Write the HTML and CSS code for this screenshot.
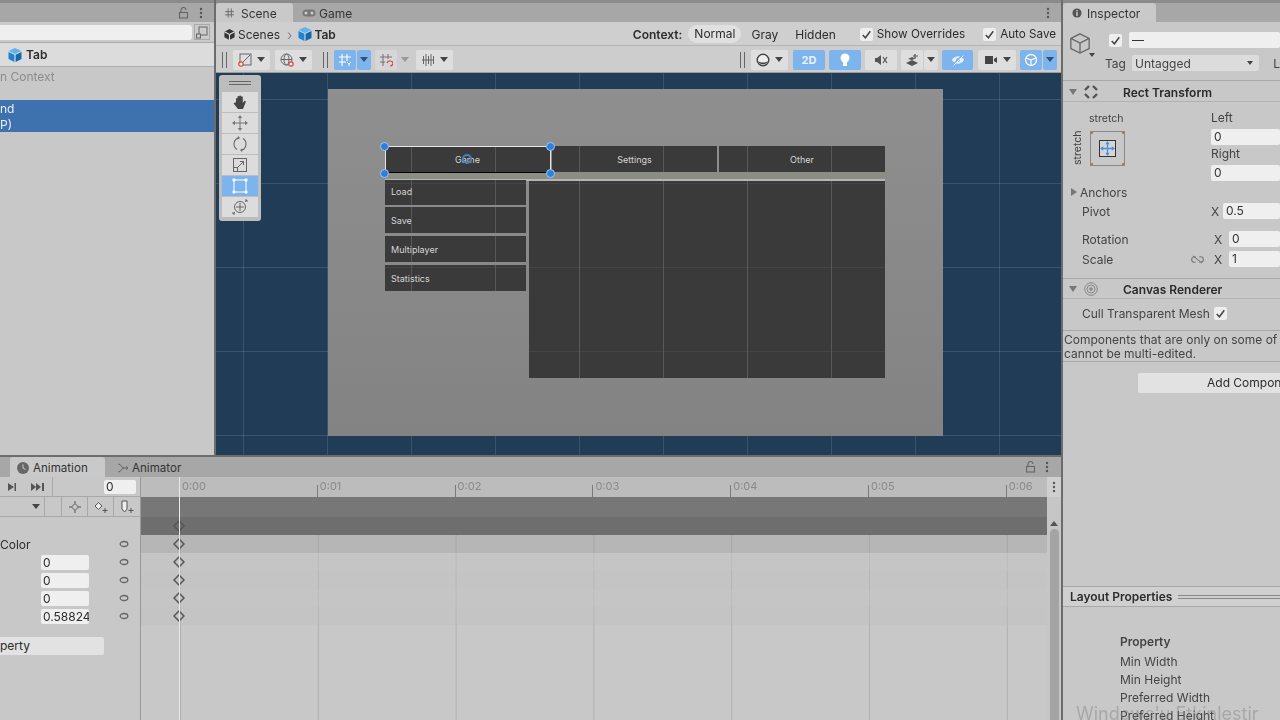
FILE: index.html
```html
<!DOCTYPE html>
<html lang="en">

<head>
   <meta charset="utf-8" />
   <title>Tab - Unity editor</title>
   <link rel="stylesheet" href="styles.css">
</head>

<body>
   <svg class="defs" width="0" height="0">
      <symbol id="cube" viewBox="0 0 14 14">
         <path d="M7 0 13.5 3 7 6 .5 3z" fill="#5fb4ee" />
         <path d="M.5 4 6.4 6.8V14L.5 11z" fill="#1f83d4" />
         <path d="M13.5 4 7.6 6.8V14l5.9-3z" fill="#1468ad" />
      </symbol>
      <symbol id="lock" viewBox="0 0 12 12">
         <path d="M3 5V3a2.5 2.5 0 0 1 5 0" fill="none" stroke="#666" stroke-width="1.1" />
         <rect x="1.5" y="5.5" width="8" height="5.5" fill="none" stroke="#666" stroke-width="1.1" />
      </symbol>
      <symbol id="dots" viewBox="0 0 4 12">
         <circle cx="2" cy="2" r="1.2" fill="#555" />
         <circle cx="2" cy="6" r="1.2" fill="#555" />
         <circle cx="2" cy="10" r="1.2" fill="#555" />
      </symbol>
      <symbol id="check" viewBox="0 0 12 12">
         <path d="M2.5 6.5 5 9l4.500-6" fill="none" stroke="#444" stroke-width="1.4" />
      </symbol>
      <symbol id="key" viewBox="0 0 12 12">
         <path d="M6 1 11 6 6 11 1 6z" fill="none" stroke="#555" stroke-width="1.5" />
      </symbol>
      <symbol id="oval" viewBox="0 0 10 8">
         <ellipse cx="5" cy="4" rx="3.8" ry="2.5" fill="none" stroke="#666" stroke-width="1.3" />
      </symbol>
   </svg>

   <div class="editor">
      <div class="work">
         <div class="upper">
            <!-- hierarchy -->
            <section class="hierarchy">
               <div class="tabbar tabbar-end">
                  <svg class="ico12"><use href="#lock" /></svg>
                  <svg class="ico-dots"><use href="#dots" /></svg>
               </div>
               <div class="search-row">
                  <div class="search-field"></div>
                  <svg class="search-btn" viewBox="0 0 16 16">
                     <rect x=".5" y=".5" width="15" height="15" fill="none" stroke="#aaa" />
                     <rect x="5" y="3" width="8" height="8" fill="none" stroke="#666" />
                     <rect x="2.5" y="10" width="4" height="4" fill="#c8c8c8" stroke="#666" />
                  </svg>
               </div>
               <div class="crumb-row">
                  <svg class="ico14"><use href="#cube" /></svg>
                  <b>Tab</b>
               </div>
               <div class="context-note">n Context</div>
               <div class="selected-row">nd<br>P)</div>
            </section>

            <!-- scene -->
            <section class="scene-panel">
               <div class="tabbar">
                  <div class="tab tab-scene">
                     <svg class="ico-hash" viewBox="0 0 10 10"><path d="M3.5 0v10M7 0v10M0 3.5h10M0 7h10" stroke="#666" stroke-width="1" /></svg>
                     Scene
                  </div>
                  <div class="tab tab-game">
                     <svg class="ico-game" viewBox="0 0 14 8"><rect x=".5" y=".5" width="13" height="7" rx="3.5" fill="#777" /><circle cx="4" cy="4" r="1.5" fill="#ccc" /><circle cx="10" cy="4" r="1.5" fill="#ccc" /></svg>
                     Game
                  </div>
                  <svg class="ico-dots push"><use href="#dots" /></svg>
               </div>
               <div class="context-row">
                  <svg class="ico-scenes" viewBox="0 0 14 14"><path d="M7 1 12.5 4v6L7 13 1.5 10V4z" fill="#333" /><path d="M7 7V13M7 7 1.5 4M7 7l5.5-3" stroke="#ddd" stroke-width="1.2" /></svg>
                  <span class="crumb-scenes">Scenes</span>
                  <span class="crumb-sep">&rsaquo;</span>
                  <svg class="ico14"><use href="#cube" /></svg>
                  <b class="crumb-tab">Tab</b>
                  <b class="context-label">Context:</b>
                  <span class="pill">Normal</span>
                  <span class="ctx-gray">Gray</span>
                  <span class="ctx-hidden">Hidden</span>
                  <span class="checkbox ctx-check"><svg><use href="#check" /></svg></span>
                  <span class="check-text">Show Overrides</span>
                  <span class="checkbox ctx-check2"><svg><use href="#check" /></svg></span>
                  <span class="check-text">Auto Save</span>
               </div>
               <div class="toolbar">
                  <i class="grip"></i>
                  <div class="tbtn w37 ml6">
                     <svg class="ico14" viewBox="0 0 14 14"><rect x="2" y="1" width="11" height="11" fill="none" stroke="#666" /><path d="M3 11 12 2" stroke="#666" /><circle cx="3" cy="11" r="2.2" fill="#eee" stroke="#d44" stroke-width="1.2" /></svg>
                     <i class="arrow"></i>
                  </div>
                  <div class="tbtn w37 ml5">
                     <svg class="ico14" viewBox="0 0 14 14"><circle cx="6.5" cy="6.5" r="5.5" fill="none" stroke="#666" /><ellipse cx="6.5" cy="6.5" rx="2.5" ry="5.5" fill="none" stroke="#666" /><path d="M1 6.500h11" stroke="#666" /><circle cx="11" cy="11" r="2.2" fill="#eee" stroke="#d44" stroke-width="1.2" /></svg>
                     <i class="arrow"></i>
                  </div>
                  <i class="grip ml11"></i>
                  <div class="tbtn on w22 ml6">
                     <svg class="ico14" viewBox="0 0 14 14"><path d="M4 1v12M9 1v7M1 4h12M1 9h7" stroke="#fff" stroke-width="1.1" /><path d="M9 9l2 2 2-2M11 11v2" stroke="#fff" fill="none" /></svg>
                  </div>
                  <div class="tbtn on w14 ml1"><i class="arrow"></i></div>
                  <div class="tbtn off w22 ml4">
                     <svg class="ico14" viewBox="0 0 14 14"><path d="M4 1v12M9 1v5M1 4h12M1 9h5" stroke="#777" stroke-width="1.1" /><path d="M8 10a3 2.5 0 1 1 3 3" fill="none" stroke="#d44" stroke-width="1.2" /></svg>
                  </div>
                  <div class="tbtn off w14 ml1"><i class="arrow arrow-dim"></i></div>
                  <div class="tbtn w37 ml4">
                     <svg class="ico14" viewBox="0 0 14 14"><path d="M1 7h12M2.5 3v8M5 1v12M7.5 3v8M10 1v12M12.500 3v8" stroke="#666" stroke-width="1" /></svg>
                     <i class="arrow"></i>
                  </div>
                  <i class="grip grip-right"></i>
                  <div class="tbtn w37 ml6">
                     <svg class="ico14" viewBox="0 0 14 14"><circle cx="7" cy="7" r="5.8" fill="#eee" stroke="#444" stroke-width="1.4" /><path d="M2 8a5.5 5.5 0 0 0 10 0C9 10 5 10 2 8z" fill="#444" /></svg>
                     <i class="arrow"></i>
                  </div>
                  <div class="tbtn on w32 ml5 label-2d">2D</div>
                  <div class="tbtn on w32 ml4">
                     <svg class="ico14" viewBox="0 0 14 14"><circle cx="7" cy="5" r="4.5" fill="#fff" /><rect x="5" y="9" width="4" height="4" fill="#fff" /></svg>
                  </div>
                  <div class="tbtn w32 ml4">
                     <svg class="ico14" viewBox="0 0 14 14"><path d="M1 5h2l4-3v10L3 9H1z" fill="#555" /><path d="M9 4l4 6M13 4 9 10" stroke="#555" stroke-width="1.2" /></svg>
                  </div>
                  <div class="tbtn w22 ml4">
                     <svg class="ico14" viewBox="0 0 14 14"><path d="M1 10 7 7l6 3-6 3zM3 6l4-2 3 1.5L7 7z" fill="#555" /><path d="M10 1v5M8 3h5" stroke="#555" stroke-width="1.2" /></svg>
                  </div>
                  <div class="tbtn w14 ml1"><i class="arrow"></i></div>
                  <div class="tbtn on w31 ml4">
                     <svg class="ico14" viewBox="0 0 14 14"><path d="M1 7c3-5 9-5 12 0-3 5-9 5-12 0z" fill="#e8f2fc" /><circle cx="7" cy="7" r="2" fill="#7fb5ee" /><path d="M2 12 12 2" stroke="#7fb5ee" stroke-width="2" /><path d="M2.500 12.500 12.500 2.500" stroke="#e8f2fc" stroke-width="1" /></svg>
                  </div>
                  <div class="tbtn w38 ml5">
                     <svg class="ico14" viewBox="0 0 14 14"><rect x="1" y="3" width="8" height="8" fill="#444" /><path d="M10 6l3-2v6l-3-2z" fill="#444" /></svg>
                     <i class="arrow"></i>
                  </div>
                  <div class="tbtn on w22 ml4">
                     <svg class="ico14" viewBox="0 0 14 14"><circle cx="7" cy="7" r="5.5" fill="none" stroke="#fff" stroke-width="1.3" /><path d="M7 7 2 5M7 7l5-2M7 7v6" stroke="#fff" stroke-width="1.2" /></svg>
                  </div>
                  <div class="tbtn on w14 ml1"><i class="arrow"></i></div>
               </div>

               <div class="scene-view">
                  <div class="scene-grid"></div>
                  <div class="canvas-rect"></div>
                  <div class="ui-box tab-btn tab-btn-1">Game</div>
                  <div class="ui-box tab-btn tab-btn-2">Settings</div>
                  <div class="ui-box tab-btn tab-btn-3">Other</div>
                  <div class="strip"></div>
                  <div class="ui-box menu-btn menu-1">Load</div>
                  <div class="ui-box menu-btn menu-2">Save</div>
                  <div class="ui-box menu-btn menu-3">Multiplayer</div>
                  <div class="ui-box menu-btn menu-4">Statistics</div>
                  <div class="ui-box big-panel"></div>
                  <div class="canvas-grid"></div>
                  <div class="selection"></div>
                  <i class="handle h-tl"></i>
                  <i class="handle h-tr"></i>
                  <i class="handle h-bl"></i>
                  <i class="handle h-br"></i>
                  <i class="pivot"></i>

                  <div class="tools">
                     <div class="tools-grip"></div>
                     <div class="tool">
                        <svg class="ico16" viewBox="0 0 16 16"><path d="M4 8V4.500a1 1 0 0 1 1.500 0V7V2.500a1 1 0 0 1 1.800 0V7V2a1 1 0 0 1 1.800 0v5V3a1 1 0 0 1 1.700 0v6l1.500-2a1 1 0 0 1 1.500 1L11 15H6L2 10c-.5-1 .6-2 1.500-1.200z" fill="#444" /></svg>
                     </div>
                     <div class="tool">
                        <svg class="ico16" viewBox="0 0 16 16"><path d="M8 3v10M3 8h10" stroke="#777" stroke-width="1" /><path d="M8 0l2.200 3H5.800zM8 16l2.200-3H5.800zM0 8l3-2.200v4.400zM16 8l-3-2.200v4.400z" fill="#777" /></svg>
                     </div>
                     <div class="tool">
                        <svg class="ico16" viewBox="0 0 16 16"><path d="M5 13.500A6.500 6.500 0 0 1 7 1.700M11 2.500a6.500 6.500 0 0 1-2 11.800" fill="none" stroke="#666" stroke-width="1.1" /><path d="M6 0l2 2-2.500 1.500zM10 16l-2-2 2.500-1.500z" fill="#666" /></svg>
                     </div>
                     <div class="tool">
                        <svg class="ico16" viewBox="0 0 16 16"><rect x="1.5" y="1.5" width="13" height="13" fill="none" stroke="#666" /><rect x="1.5" y="10.5" width="4" height="4" fill="none" stroke="#666" /><path d="M6 10 11.500 4.500M8 4.500h3.500V8" fill="none" stroke="#666" /></svg>
                     </div>
                     <div class="tool tool-on">
                        <svg class="ico16" viewBox="0 0 16 16"><rect x="2" y="2" width="12" height="12" fill="none" stroke="#fff" /><path d="M1 1h2v2H1zM13 1h2v2h-2zM1 13h2v2H1zM13 13h2v2h-2z" fill="#fff" stroke="#fff" /></svg>
                     </div>
                     <div class="tool">
                        <svg class="ico16" viewBox="0 0 16 16"><circle cx="8" cy="8" r="5.5" fill="none" stroke="#666" /><path d="M8 4v8M4 8h8M1 15l2-2M15 1l-2 2" stroke="#666" /><path d="M1 13v2h2M15 3V1h-2" fill="none" stroke="#666" /></svg>
                     </div>
                  </div>
               </div>
            </section>
         </div>

         <!-- animation -->
         <section class="animation">
            <div class="tabbar anim-tabs">
               <div class="tab tab-anim">
                  <svg class="ico12" viewBox="0 0 12 12"><circle cx="6" cy="6" r="6" fill="#666" /><path d="M6 2.500V6l2.500 1.500" fill="none" stroke="#ccc" /></svg>
                  Animation
               </div>
               <div class="tab tab-animator">
                  <svg class="ico12" viewBox="0 0 12 12"><path d="M1 2c4 0 3 4 6 4M1 10c4 0 3-4 6-4h4M9 4l2 2-2 2" fill="none" stroke="#666" /></svg>
                  Animator
               </div>
               <svg class="ico12 push"><use href="#lock" /></svg>
               <svg class="ico-dots"><use href="#dots" /></svg>
            </div>
            <div class="anim-body">
               <div class="anim-side">
                  <div class="side-row side-controls">
                     <svg class="ctl ctl-1" viewBox="0 0 10 10"><path d="M1 1l6 4-6 4z" fill="#555" /><rect x="7.5" y="1" width="1.5" height="8" fill="#555" /></svg>
                     <svg class="ctl ctl-2" viewBox="0 0 14 10"><path d="M0 1l5 4-5 4zM5 1l5 4-5 4z" fill="#555" /><rect x="11" y="1" width="2" height="8" fill="#555" /></svg>
                     <i class="ctl-sep"></i>
                     <div class="frame-field">0</div>
                  </div>
                  <div class="side-row side-keys">
                     <i class="arrow key-arrow"></i>
                     <span class="key-gap"></span>
                     <span class="key-btn">
                        <svg class="ico12" viewBox="0 0 12 12"><path d="M6 2.500 9.500 6 6 9.500 2.500 6z" fill="none" stroke="#555" /><path d="M6 0v2.500M6 9.500V12M0 6h2.500M9.500 6H12" stroke="#555" /></svg>
                     </span>
                     <span class="key-btn">
                        <svg class="ico14" viewBox="0 0 14 14"><path d="M4.500 2.500 8 6 4.500 9.500 1 6z" fill="#eee" stroke="#555" /><path d="M11 8v5M8.500 10.500h5" stroke="#555" /></svg>
                     </span>
                     <span class="key-btn">
                        <svg class="ico14" viewBox="0 0 14 14"><path d="M2 1h5v8L4.500 12 2 9z" fill="#eee" stroke="#555" /><path d="M11 8v5M8.500 10.500h5" stroke="#555" /></svg>
                     </span>
                  </div>
                  <div class="side-row"></div>
                  <div class="side-row prop-row"><span class="prop-name">Color</span><svg class="oval"><use href="#oval" /></svg></div>
                  <div class="side-row prop-row"><span class="prop-val">0</span><svg class="oval"><use href="#oval" /></svg></div>
                  <div class="side-row prop-row"><span class="prop-val">0</span><svg class="oval"><use href="#oval" /></svg></div>
                  <div class="side-row prop-row"><span class="prop-val">0</span><svg class="oval"><use href="#oval" /></svg></div>
                  <div class="side-row prop-row"><span class="prop-val">0.58824</span><svg class="oval"><use href="#oval" /></svg></div>
                  <div class="add-prop">perty</div>
               </div>
               <div class="timeline">
                  <div class="ruler">
                     <span class="mark mark-first">0:00</span>
                     <span class="mark">0:01</span>
                     <span class="mark">0:02</span>
                     <span class="mark">0:03</span>
                     <span class="mark">0:04</span>
                     <span class="mark">0:05</span>
                     <span class="mark">0:06</span>
                  </div>
                  <div class="track track-dark"></div>
                  <div class="track track-darker"><svg class="key"><use href="#key" /></svg></div>
                  <div class="track track-head"><svg class="key"><use href="#key" /></svg></div>
                  <div class="track track-a"><svg class="key"><use href="#key" /></svg></div>
                  <div class="track track-b"><svg class="key"><use href="#key" /></svg></div>
                  <div class="track track-a"><svg class="key"><use href="#key" /></svg></div>
                  <div class="track track-b"><svg class="key"><use href="#key" /></svg></div>
                  <div class="playhead"></div>
               </div>
               <div class="anim-scroll">
                  <div class="scroll-top"><svg class="ico-dots"><use href="#dots" /></svg></div>
                  <div class="scroll-spacer"></div>
                  <div class="scroll-up"></div>
                  <div class="scroll-thumb"></div>
               </div>
            </div>
         </section>
      </div>

      <!-- inspector -->
      <section class="inspector">
         <div class="tabbar">
            <div class="tab tab-inspector">
               <svg class="ico-info" viewBox="0 0 12 12"><circle cx="6" cy="6" r="5.5" fill="#555" /><rect x="5.2" y="5" width="1.6" height="4.5" fill="#ddd" /><rect x="5.2" y="2.5" width="1.6" height="1.6" fill="#ddd" /></svg>
               Inspector
            </div>
         </div>
         <div class="obj-head">
            <div class="obj-icon">
               <svg viewBox="0 0 24 24" class="obj-cube"><path d="M12 2 22 7v11l-10 5L2 18V7zM2 7l10 5 10-5M12 12v11" fill="none" stroke="#666" stroke-width="1.4" /></svg>
               <i class="arrow obj-arrow"></i>
            </div>
            <div class="obj-fields">
               <div class="obj-line">
                  <span class="checkbox"><svg><use href="#check" /></svg></span>
                  <div class="field obj-name">&mdash;</div>
               </div>
               <div class="obj-line obj-tag">
                  <span>Tag</span>
                  <div class="field-drop">Untagged<i class="arrow"></i></div>
                  <span class="layer-l">L</span>
               </div>
            </div>
         </div>
         <div class="comp-head comp-rect">
            <i class="fold"></i>
            <svg class="ico14 comp-icon" viewBox="0 0 14 14"><path d="M1 5 5 1M13 5 9 1M1 9l4 4M13 9l-4 4" fill="none" stroke="#555" stroke-width="2.4" /></svg>
            <b>Rect Transform</b>
         </div>
         <div class="rect-body">
            <div class="anchor-col">
               <span class="anchor-top">stretch</span>
               <div class="anchor-row">
                  <span class="anchor-side">stretch</span>
                  <div class="anchor-box">
                     <div class="anchor-inner">
                        <svg viewBox="0 0 14 14"><path d="M7 1v12M1 7h12" stroke="#4a90e2" stroke-width="1.2" /><path d="M7 0 9 3H5zM7 14 9 11H5zM0 7 3 5V9zM14 7 11 5V9z" fill="#4a90e2" /></svg>
                     </div>
                  </div>
               </div>
            </div>
            <div class="rect-fields">
               <span>Left</span>
               <div class="field">0</div>
               <span>Right</span>
               <div class="field">0</div>
            </div>
         </div>
         <div class="anchors-row"><i class="fold-right"></i>Anchors</div>
         <div class="prop-line pivot-line"><span>Pivot</span><span class="axis">X</span><div class="field">0.5</div></div>
         <div class="prop-line rot-line"><span>Rotation</span><span class="axis">X</span><div class="field">0</div></div>
         <div class="prop-line scale-line">
            <span>Scale</span>
            <svg class="link" viewBox="0 0 14 10"><path d="M5 2H3.500a3 3 0 0 0 0 6H5M9 2h1.500a3 3 0 0 1 0 6H9M2 1l10 8" fill="none" stroke="#777" stroke-width="1.2" /></svg>
            <span class="axis">X</span>
            <div class="field">1</div>
         </div>
         <div class="comp-head comp-canvas">
            <i class="fold"></i>
            <svg class="ico14 comp-icon" viewBox="0 0 14 14"><circle cx="7" cy="7" r="6.3" fill="none" stroke="#888" /><circle cx="7" cy="7" r="4" fill="none" stroke="#888" /><circle cx="7" cy="7" r="1.8" fill="#888" /></svg>
            <b>Canvas Renderer</b>
         </div>
         <div class="cull-row">
            <span>Cull Transparent Mesh</span>
            <span class="checkbox"><svg><use href="#check" /></svg></span>
         </div>
         <div class="multi-note">Components that are only on some of<br>cannot be multi-edited.</div>
         <div class="add-comp">Add Component</div>
         <div class="layout-head">
            <b>Layout Properties</b>
            <i class="head-lines"></i>
         </div>
         <div class="layout-table">
            <b>Property</b>
            <span>Min Width</span>
            <span>Min Height</span>
            <span>Preferred Width</span>
            <span>Preferred Height</span>
         </div>
         <div class="watermark">Windows'u Etkinleştir</div>
      </section>
   </div>
</body>

</html>
```

FILE: styles.css
```css
* {
   box-sizing: border-box;
}

html,
body {
   margin: 0;
   padding: 0;
}

body {
   width: 1280px;
   height: 720px;
   overflow: hidden;
   background: #6c6c6c;
   color: #2c2c2c;
   font-family: "Inter", "Liberation Sans", sans-serif;
   font-size: 12px;
}

b {
   font-weight: 600;
}

i {
   display: block;
}

svg {
   display: block;
   flex: none;
}

.defs {
   position: absolute;
}

.editor {
   display: flex;
   width: 1280px;
   height: 720px;
   filter: blur(.45px);
}

.work {
   width: 1061px;
   display: flex;
   flex-direction: column;
   gap: 2px;
}

.upper {
   display: flex;
   gap: 2px;
   height: 455px;
}

.ico12 {
   width: 12px;
   height: 12px;
}

.ico14 {
   width: 14px;
   height: 14px;
}

.ico16 {
   width: 16px;
   height: 16px;
}

.ico-dots {
   width: 4px;
   height: 12px;
}

.push {
   margin-left: auto;
}

.tabbar {
   height: 22px;
   padding-top: 3px;
   background: linear-gradient(#8b8b8b 3px, #a7a7a7 3px);
   display: flex;
   align-items: center;
}

.tab {
   height: 19px;
   padding-top: 1px;
   display: flex;
   align-items: center;
   gap: 6px;
   color: #333;
}

.arrow {
   width: 0;
   height: 0;
   border-left: 4px solid transparent;
   border-right: 4px solid transparent;
   border-top: 5px solid #444;
}

.arrow-dim {
   border-top-color: #999;
}

.checkbox {
   width: 13px;
   height: 13px;
   background: #eee;
   border-radius: 2px;
   display: block;
   flex: none;
}

.checkbox svg {
   width: 13px;
   height: 13px;
}

.field {
   height: 16px;
   background: #efefef;
   border-radius: 2px;
   padding-left: 3px;
   line-height: 16px;
   color: #333;
}

/* hierarchy */

.hierarchy {
   width: 214px;
   background: #c8c8c8;
}

.tabbar-end {
   justify-content: flex-end;
   gap: 9px;
   padding-right: 11px;
}

.search-row {
   height: 21px;
   display: flex;
   align-items: center;
   gap: 2px;
   background: #cbcbcb;
   border-bottom: 1px solid #aaa;
}

.search-field {
   width: 192px;
   height: 15px;
   background: #efefef;
   border-radius: 0 3px 3px 0;
}

.search-btn {
   width: 16px;
   height: 16px;
}

.crumb-row {
   height: 24px;
   display: flex;
   align-items: center;
   gap: 4px;
   padding-left: 8px;
   background: #dcdcdc;
   border-bottom: 1px solid #b0b0b0;
}

.context-note {
   height: 33px;
   padding-top: 3px;
   color: #8c8c8c;
   line-height: 14px;
}

.selected-row {
   height: 32px;
   padding-top: 1px;
   background: #3d72ae;
   color: #e8eef5;
   line-height: 16px;
}

/* scene panel */

.scene-panel {
   width: 845px;
   display: flex;
   flex-direction: column;
}

.scene-panel .tabbar {
   padding-right: 11px;
}

.tab-scene {
   width: 77px;
   background: #c9c9c9;
   padding-left: 9px;
   gap: 7px;
   border-radius: 3px 3px 0 0;
}

.ico-hash {
   width: 9px;
   height: 10px;
}

.tab-game {
   margin-left: 9px;
   gap: 3px;
}

.ico-game {
   width: 14px;
   height: 8px;
}

.context-row {
   height: 24px;
   padding: 1px 0 0 7px;
   display: flex;
   align-items: center;
   background: #cfcfcf;
   border-bottom: 1px solid #b4b4b4;
   white-space: nowrap;
}

.ico-scenes {
   width: 13px;
   height: 13px;
}

.crumb-scenes {
   margin-left: 2px;
}

.crumb-sep {
   margin: 0 6px 0 7px;
   color: #888;
   font-size: 14px;
}

.crumb-tab {
   margin-left: 2px;
}

.context-label {
   margin-left: 297px;
}

.pill {
   margin-left: 6px;
   padding: 0 6px;
   height: 18px;
   line-height: 18px;
   border-radius: 9px;
   background: #e0e0e0;
}

.ctx-gray {
   margin-left: 10px;
}

.ctx-hidden {
   margin-left: 17px;
}

.ctx-check {
   margin-left: 24px;
}

.ctx-check2 {
   margin-left: 18px;
}

.check-text {
   margin-left: 4px;
   font-size: 11.7px;
}

.toolbar {
   height: 27px;
   display: flex;
   align-items: center;
   padding: 1px 4px 0 6px;
   background: #cdcdcd;
   border-bottom: 1px solid #9d9d9d;
}

.grip {
   width: 5px;
   height: 16px;
   border-left: 1px solid #666;
   border-right: 1px solid #666;
   flex: none;
}

.grip-right {
   margin-left: auto;
}

.tbtn {
   height: 20px;
   display: flex;
   align-items: center;
   justify-content: center;
   gap: 5px;
   background: #dedede;
   border-radius: 2px;
   flex: none;
}

.tbtn.on {
   background: #7eb4ee;
}

.tbtn.on .arrow {
   border-top-color: #33506f;
}

.tbtn.off {
   background: #d6d6d6;
}

.tbtn.off.w14 {
   background: none;
}

.label-2d {
   color: #e9f2fb;
   font-size: 11px;
   font-weight: 700;
}

.w14 { width: 14px; }
.w22 { width: 22px; }
.w31 { width: 31px; }
.w32 { width: 32px; }
.w37 { width: 37px; }
.w38 { width: 38px; }
.ml1 { margin-left: 1px; }
.ml4 { margin-left: 4px; }
.ml5 { margin-left: 5px; }
.ml6 { margin-left: 6px; }
.ml11 { margin-left: 11px; }

.scene-view {
   flex: 1;
   position: relative;
   overflow: hidden;
   background: #203c57;
}

.scene-grid {
   position: absolute;
   inset: 0;
   background-image:
      linear-gradient(90deg, rgba(255, 255, 255, .12) 1px, transparent 1px),
      linear-gradient(rgba(255, 255, 255, .12) 1px, transparent 1px);
   background-size: 84px 84px;
   background-position: 27px 26px;
}

.canvas-rect {
   position: absolute;
   left: 112px;
   top: 16px;
   width: 615px;
   height: 347px;
   background: linear-gradient(#8f8f8f, #838383);
}

/* grid lines only show up on the dark boxes, lighten hides them on the grey */
.canvas-grid {
   position: absolute;
   left: 112px;
   top: 16px;
   width: 615px;
   height: 347px;
   mix-blend-mode: lighten;
   background-image:
      linear-gradient(90deg, #585858 1px, transparent 1px),
      linear-gradient(#444 1px, transparent 1px);
   background-size: 84px 84px;
   background-position: -1px 10px;
}

.ui-box {
   position: absolute;
   background: #3a3a3a;
   color: #d6d6d6;
   font-size: 9px;
}

.tab-btn {
   top: 73px;
   height: 26px;
   width: 165px;
   display: flex;
   align-items: center;
   justify-content: center;
}

.tab-btn-1 { left: 169px; }
.tab-btn-2 { left: 336px; }
.tab-btn-3 { left: 503px; width: 166px; }

.strip {
   position: absolute;
   left: 169px;
   top: 99px;
   width: 500px;
   height: 9px;
   background: #8a8e84;
   border-bottom: 2px solid #b5b5b5;
}

.menu-btn {
   left: 169px;
   width: 141px;
   height: 26px;
   padding-left: 6px;
   line-height: 28px;
}

.menu-1 { top: 107px; height: 25px; line-height: 23px; }
.menu-2 { top: 134px; }
.menu-3 { top: 163px; }
.menu-4 { top: 192px; }

.big-panel {
   left: 313px;
   top: 108px;
   width: 356px;
   height: 197px;
}

.selection {
   position: absolute;
   left: 169px;
   top: 73px;
   width: 166px;
   height: 27px;
   border: 1.5px solid #e6e6e6;
   border-bottom: 1.5px solid #000;
}

.handle {
   position: absolute;
   width: 9px;
   height: 9px;
   border-radius: 50%;
   background: #2f7fe0;
   border: 1px solid #a9c6e8;
}

.h-tl { left: 164px; top: 69px; }
.h-tr { left: 330px; top: 69px; }
.h-bl { left: 164px; top: 96px; }
.h-br { left: 330px; top: 96px; }

.pivot {
   position: absolute;
   left: 246px;
   top: 81px;
   width: 10px;
   height: 10px;
   border-radius: 50%;
   border: 2px solid #4a7fc0;
}

.tools {
   position: absolute;
   left: 3px;
   top: 2px;
   width: 42px;
   height: 146px;
   background: #bdbdbd;
   border-radius: 3px;
   padding: 0 3px;
   display: flex;
   flex-direction: column;
   gap: 1px;
}

.tools-grip {
   height: 4px;
   margin: 6px 7px 6px;
   border-top: 1px solid #666;
   border-bottom: 1px solid #666;
}

.tool {
   height: 20px;
   background: #dcdcdc;
   display: flex;
   align-items: center;
   justify-content: center;
}

.tool-on {
   background: #7eb4ee;
}

/* animation */

.animation {
   flex: 1;
   display: flex;
   flex-direction: column;
   background: #c8c8c8;
}

.anim-tabs {
   height: 20px;
   padding: 0 12px 0 10px;
   background: #a7a7a7;
   gap: 12px;
}

.anim-tabs .tab {
   height: 20px;
   font-size: 11.6px;
}

.anim-tabs .ico-dots {
   margin-left: -4px;
}

.tab-anim {
   width: 95px;
   padding-left: 7px;
   gap: 4px;
   background: #c9c9c9;
   border-radius: 3px 3px 0 0;
}

.tab-animator {
   gap: 3px;
}

.anim-body {
   flex: 1;
   display: flex;
   position: relative;
}

.anim-side {
   width: 141px;
   border-right: 1px solid #999;
   display: flex;
   flex-direction: column;
}

.side-row {
   height: 18px;
   position: relative;
   display: flex;
   align-items: center;
   flex: none;
}

.side-controls {
   height: 20px;
   border-bottom: 1px solid #a8a8a8;
}

.ctl {
   height: 10px;
}

.ctl-1 {
   width: 10px;
   margin-left: 7px;
}

.ctl-2 {
   width: 14px;
   margin-left: 14px;
}

.ctl-sep {
   width: 1px;
   height: 20px;
   margin-left: 7px;
   background: #a8a8a8;
}

.frame-field {
   width: 32px;
   height: 14px;
   line-height: 14px;
   padding-left: 2px;
   margin-left: 51px;
   background: #efefef;
   border-radius: 2px;
}

.side-keys {
   height: 20px;
   border-bottom: 1px solid #a8a8a8;
}

.key-arrow {
   margin-left: 32px;
   margin-right: 4px;
}

.key-gap {
   width: 17px;
   height: 20px;
   border-left: 1px solid #a8a8a8;
}

.key-btn {
   width: 26px;
   height: 20px;
   border-left: 1px solid #a8a8a8;
   display: flex;
   align-items: center;
   justify-content: center;
   flex: none;
}

.prop-name {
   margin-right: auto;
}

.prop-val {
   width: 48px;
   height: 15px;
   line-height: 15px;
   margin-left: 41px;
   padding-left: 2px;
   background: #efefef;
   border-radius: 2px;
   overflow: hidden;
   white-space: nowrap;
   flex: none;
}

.oval {
   width: 10px;
   height: 8px;
   position: absolute;
   left: 119px;
}

.add-prop {
   width: 104px;
   height: 18px;
   margin-top: 12px;
   line-height: 18px;
   background: #e2e2e2;
   border-radius: 0 2px 2px 0;
}

.timeline {
   width: 906px;
   display: flex;
   flex-direction: column;
   background-image: linear-gradient(90deg, transparent 137px, #afafaf 137px, #afafaf 138px, transparent 138px);
   background-size: 137.8px 100%;
   background-position: 40px 0;
   position: relative;
}

.ruler {
   height: 20px;
   display: flex;
   padding-left: 38px;
   overflow: hidden;
   background: #bcbcbc;
}

.mark {
   width: 137.8px;
   flex: none;
   padding: 2px 0 0 3px;
   color: #8a8a8a;
   font-size: 11px;
   background: linear-gradient(#7a7a7a, #7a7a7a) left bottom / 1px 12px no-repeat;
}

.mark-first {
   background: none;
}

.track {
   height: 18px;
   display: flex;
   align-items: center;
}

.track-dark {
   height: 20px;
   background: #777;
}

.track-darker {
   background: #6e6e6e;
}

.track-head {
   background: rgba(150, 150, 150, .35);
}

.track-a {
   background: rgba(195, 195, 195, .6);
}

.track-b {
   background: rgba(190, 190, 190, .4);
}

.key {
   width: 12px;
   height: 12px;
   margin-left: 32px;
}

.playhead {
   position: absolute;
   left: 38px;
   top: 0;
   bottom: 0;
   width: 1px;
   background: #e9e9e9;
}

.anim-scroll {
   width: 14px;
   display: flex;
   flex-direction: column;
   align-items: center;
   background: #c6c6c6;
}

.scroll-top {
   width: 14px;
   height: 20px;
   display: flex;
   align-items: center;
   justify-content: center;
   background: #cfcfcf;
}

.scroll-spacer {
   height: 24px;
}

.scroll-up {
   width: 0;
   height: 0;
   border-left: 4px solid transparent;
   border-right: 4px solid transparent;
   border-bottom: 5px solid #555;
}

.scroll-thumb {
   width: 9px;
   flex: 1;
   margin-top: 3px;
   background: #a4a4a4;
   border-radius: 5px 5px 0 0;
}

/* inspector */

.inspector {
   width: 217px;
   margin-left: 2px;
   background: #c8c8c8;
   position: relative;
   overflow: hidden;
}

.tab-inspector {
   width: 93px;
   padding-left: 9px;
   gap: 5px;
   background: #c9c9c9;
   border-radius: 3px 3px 0 0;
}

.ico-info {
   width: 10px;
   height: 10px;
}

.obj-head {
   height: 59px;
   display: flex;
   border-bottom: 1px solid #a8a8a8;
}

.obj-icon {
   width: 46px;
   position: relative;
   padding: 9px 0 0 6px;
}

.obj-cube {
   width: 22px;
   height: 24px;
}

.obj-arrow {
   position: absolute;
   left: 26px;
   top: 31px;
   border-left-width: 3px;
   border-right-width: 3px;
   border-top-width: 4px;
}

.obj-fields {
   flex: 1;
   min-width: 0;
}

.obj-line {
   display: flex;
   align-items: center;
   margin-top: 10px;
   gap: 7px;
}

.obj-name {
   flex: 1;
}

.obj-tag {
   margin: 7px 0 0 -4px;
   gap: 4px;
   color: #444;
}

.field-drop {
   width: 131px;
   height: 16px;
   margin-left: 2px;
   padding: 0 6px 0 3px;
   display: flex;
   align-items: center;
   justify-content: space-between;
   background: #dcdcdc;
   border-radius: 2px;
   color: #444;
}

.field-drop .arrow {
   border-left-width: 3.5px;
   border-right-width: 3.5px;
   border-top-width: 4.5px;
}

.layer-l {
   margin-left: 10px;
}

.comp-head {
   height: 21px;
   padding: 1px 0 0 6px;
   display: flex;
   align-items: center;
   border-bottom: 1px solid #b2b2b2;
   color: #2a2a2a;
}

.comp-rect {
   padding-top: 2px;
}

.fold {
   width: 0;
   height: 0;
   border-left: 4px solid transparent;
   border-right: 4px solid transparent;
   border-top: 6px solid #777;
}

.comp-icon {
   margin: 0 25px 0 7px;
}

.comp-canvas {
   margin-top: 9px;
   border-top: 1px solid #a8a8a8;
}

.rect-body {
   display: flex;
   height: 80px;
}

.anchor-col {
   width: 148px;
   padding-left: 10px;
}

.anchor-top {
   display: block;
   margin: 10px 0 0 16px;
   font-size: 10.5px;
   line-height: 13px;
   color: #444;
}

.anchor-row {
   display: flex;
   margin-top: 6px;
}

.anchor-side {
   writing-mode: vertical-rl;
   transform: rotate(180deg);
   height: 34px;
   width: 10px;
   font-size: 10.5px;
   line-height: 10px;
   text-align: center;
   color: #444;
}

/* four orange dots on the corners */
.anchor-box {
   width: 35px;
   height: 35px;
   margin-left: 7px;
   border: 1px solid #888;
   display: flex;
   align-items: center;
   justify-content: center;
   background:
      linear-gradient(#b0802c, #b0802c) left top / 2px 2px no-repeat,
      linear-gradient(#b0802c, #b0802c) right top / 2px 2px no-repeat,
      linear-gradient(#b0802c, #b0802c) left bottom / 2px 2px no-repeat,
      linear-gradient(#b0802c, #b0802c) right bottom / 2px 2px no-repeat;
}

.anchor-inner {
   width: 17px;
   height: 17px;
   border: 1.5px solid #333;
   background: #d6d6d6;
}

.rect-fields {
   flex: 1;
   display: flex;
   flex-direction: column;
   color: #444;
   padding-top: 7px;
}

.rect-fields span {
   height: 18px;
   line-height: 18px;
}

.rect-fields .field {
   flex: none;
   margin-top: 2px;
}

.anchors-row {
   height: 20px;
   padding-left: 8px;
   display: flex;
   align-items: center;
   gap: 3px;
   color: #444;
}

.fold-right {
   width: 0;
   height: 0;
   border-top: 4px solid transparent;
   border-bottom: 4px solid transparent;
   border-left: 6px solid #777;
}

.prop-line {
   display: flex;
   align-items: center;
   height: 20px;
   padding-left: 19px;
   color: #444;
}

.prop-line .axis {
   margin-left: auto;
   width: 9px;
}

.prop-line .field {
   flex: none;
   width: 51px;
   margin-left: 6px;
}

.pivot-line {
   margin-top: -1px;
}

.pivot-line .field {
   width: 57px;
   margin-left: 3px;
}

.rot-line {
   margin-top: 8px;
}

.link {
   width: 13px;
   height: 9px;
   margin-left: auto;
}

.scale-line .axis {
   margin-left: 10px;
}

.cull-row {
   height: 32px;
   padding: 0 0 2px 19px;
   display: flex;
   align-items: center;
   gap: 4px;
   color: #444;
   border-bottom: 1px solid #a8a8a8;
}

.multi-note {
   height: 31px;
   padding: 2px 0 0 1px;
   line-height: 14px;
   color: #444;
   border-bottom: 1px solid #a8a8a8;
   white-space: nowrap;
}

.add-comp {
   width: 150px;
   height: 20px;
   margin: 11px 0 0 75px;
   padding-left: 69px;
   line-height: 20px;
   background: #e2e2e2;
   border-radius: 2px;
   white-space: nowrap;
   overflow: hidden;
}

.layout-head {
   height: 21px;
   margin-top: 193px;
   padding-left: 7px;
   display: flex;
   align-items: center;
   gap: 6px;
   background: #d0d0d0;
   border-top: 1px solid #a8a8a8;
   border-bottom: 1px solid #a8a8a8;
   white-space: nowrap;
}

.head-lines {
   flex: 1;
   height: 4px;
   border-top: 1px solid #888;
   border-bottom: 1px solid #888;
}

.layout-table {
   display: flex;
   flex-direction: column;
   padding: 26px 0 0 57px;
   color: #444;
   line-height: 18px;
}

.layout-table b {
   margin-bottom: 2px;
}

.watermark {
   position: absolute;
   left: 13px;
   top: 703px;
   font-size: 18px;
   color: rgba(120, 120, 120, .4);
   white-space: nowrap;
}
```
